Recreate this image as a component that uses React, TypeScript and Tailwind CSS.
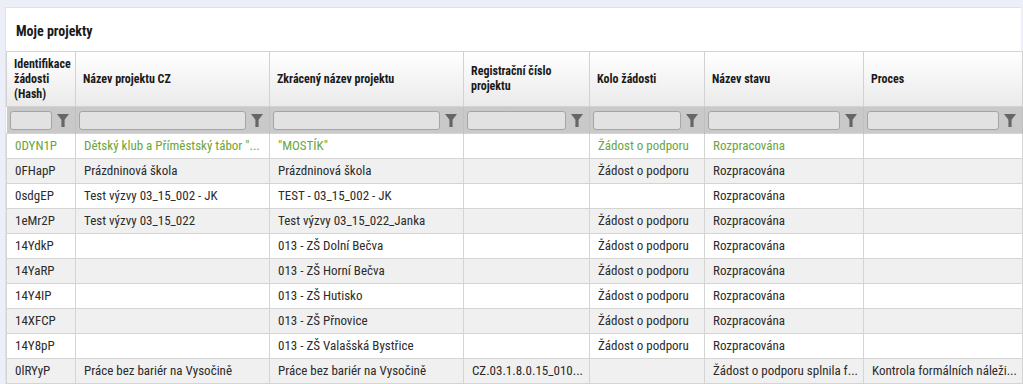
import React from 'react';

type Row = {
  hash: string;
  name: string;
  short: string;
  reg: string;
  round: string;
  state: string;
  process: string;
  active?: boolean;
};

const rows: Row[] = [
  { hash: '0DYN1P', name: 'Dětský klub a Příměstský tábor "...', short: '"MOSTÍK"', reg: '', round: 'Žádost o podporu', state: 'Rozpracována', process: '', active: true },
  { hash: '0FHapP', name: 'Prázdninová škola', short: 'Prázdninová škola', reg: '', round: 'Žádost o podporu', state: 'Rozpracována', process: '' },
  { hash: '0sdgEP', name: 'Test výzvy 03_15_002 - JK', short: 'TEST - 03_15_002 - JK', reg: '', round: '', state: 'Rozpracována', process: '' },
  { hash: '1eMr2P', name: 'Test výzvy 03_15_022', short: 'Test výzvy 03_15_022_Janka', reg: '', round: 'Žádost o podporu', state: 'Rozpracována', process: '' },
  { hash: '14YdkP', name: '', short: '013 - ZŠ Dolní Bečva', reg: '', round: 'Žádost o podporu', state: 'Rozpracována', process: '' },
  { hash: '14YaRP', name: '', short: '013 - ZŠ Horní Bečva', reg: '', round: 'Žádost o podporu', state: 'Rozpracována', process: '' },
  { hash: '14Y4IP', name: '', short: '013 - ZŠ Hutisko', reg: '', round: 'Žádost o podporu', state: 'Rozpracována', process: '' },
  { hash: '14XFCP', name: '', short: '013 - ZŠ Přnovice', reg: '', round: 'Žádost o podporu', state: 'Rozpracována', process: '' },
  { hash: '14Y8pP', name: '', short: '013 - ZŠ Valašská Bystřice', reg: '', round: 'Žádost o podporu', state: 'Rozpracována', process: '' },
  { hash: '0lRYyP', name: 'Práce bez bariér na Vysočině', short: 'Práce bez bariér na Vysočině', reg: 'CZ.03.1.8.0.15_010...', round: '', state: 'Žádost o podporu splnila f...', process: 'Kontrola formálních náleži...' },
];

const headers = [
  { label: 'Identifikace žádosti (Hash)', w: 'w-[69px]' },
  { label: 'Název projektu CZ', w: 'w-[194px]' },
  { label: 'Zkrácený název projektu', w: 'w-[194px]' },
  { label: 'Registrační číslo projektu', w: 'w-[126px]' },
  { label: 'Kolo žádosti', w: 'w-[115px]' },
  { label: 'Název stavu', w: 'w-[159px]' },
  { label: 'Proces', w: 'w-[159px]' },
];

const Funnel = () => (
  <svg width="12" height="15" viewBox="0 0 12 15" className="shrink-0">
    <path d="M0 1h12L7.6 6.8V14H4.4V6.8Z" fill="#666" />
  </svg>
);

export default function App() {
  return (
    <div className="w-[1023px] h-[384px] overflow-hidden bg-[#eceef8] pt-[7px] pl-[5px] font-['Roboto',sans-serif] font-stretch-[75%]">
      <div className="bg-white w-[1016px] h-[377px] border-l border-t border-[#dfe1ea]">
        <div className="h-[43px] flex items-center pl-[10px] pt-[4px] text-[14px] font-bold text-[#1a1a1a]">
          Moje projekty
        </div>
        <table className="table-fixed border-collapse w-[1016px]">
          <colgroup>
            {headers.map((h) => (
              <col key={h.label} className={h.w} />
            ))}
          </colgroup>
          <thead>
            <tr className="h-[55px] bg-gradient-to-b from-white to-[#eaeaea]">
              {headers.map((h) => (
                <th
                  key={h.label}
                  className="border border-[#d2d2d2] px-[7px] text-left align-middle font-bold text-[12px] leading-[15px] text-[#1a1a1a]"
                >
                  {h.label}
                </th>
              ))}
            </tr>
            <tr className="h-[27px] bg-[#c9c9c9]">
              {headers.map((h) => (
                <th key={h.label} className="pl-[3px] pr-[6px] border-r border-[#c0c0c0]">
                  <div className="flex items-center gap-[5px]">
                    <div className="flex-1 h-[19px] rounded-[3px] bg-[#e2e2e2] border border-[#a5a5a5]" />
                    <Funnel />
                  </div>
                </th>
              ))}
            </tr>
          </thead>
          <tbody>
            {rows.map((r, i) => {
              const cells = [r.hash, r.name, r.short, r.reg, r.round, r.state, r.process];
              return (
                <tr
                  key={r.hash}
                  className={`h-[25px] ${i % 2 === 1 ? 'bg-[#f0f0f0]' : 'bg-white'} ${r.active ? 'text-[#6aa53c]' : 'text-[#2b2b2b]'}`}
                >
                  {cells.map((c, j) => (
                    <td
                      key={j}
                      className="border border-[#d4d4d4] px-[8px] whitespace-nowrap overflow-hidden text-[13px] leading-[24px]"
                    >
                      {c}
                    </td>
                  ))}
                </tr>
              );
            })}
          </tbody>
        </table>
      </div>
    </div>
  );
}
